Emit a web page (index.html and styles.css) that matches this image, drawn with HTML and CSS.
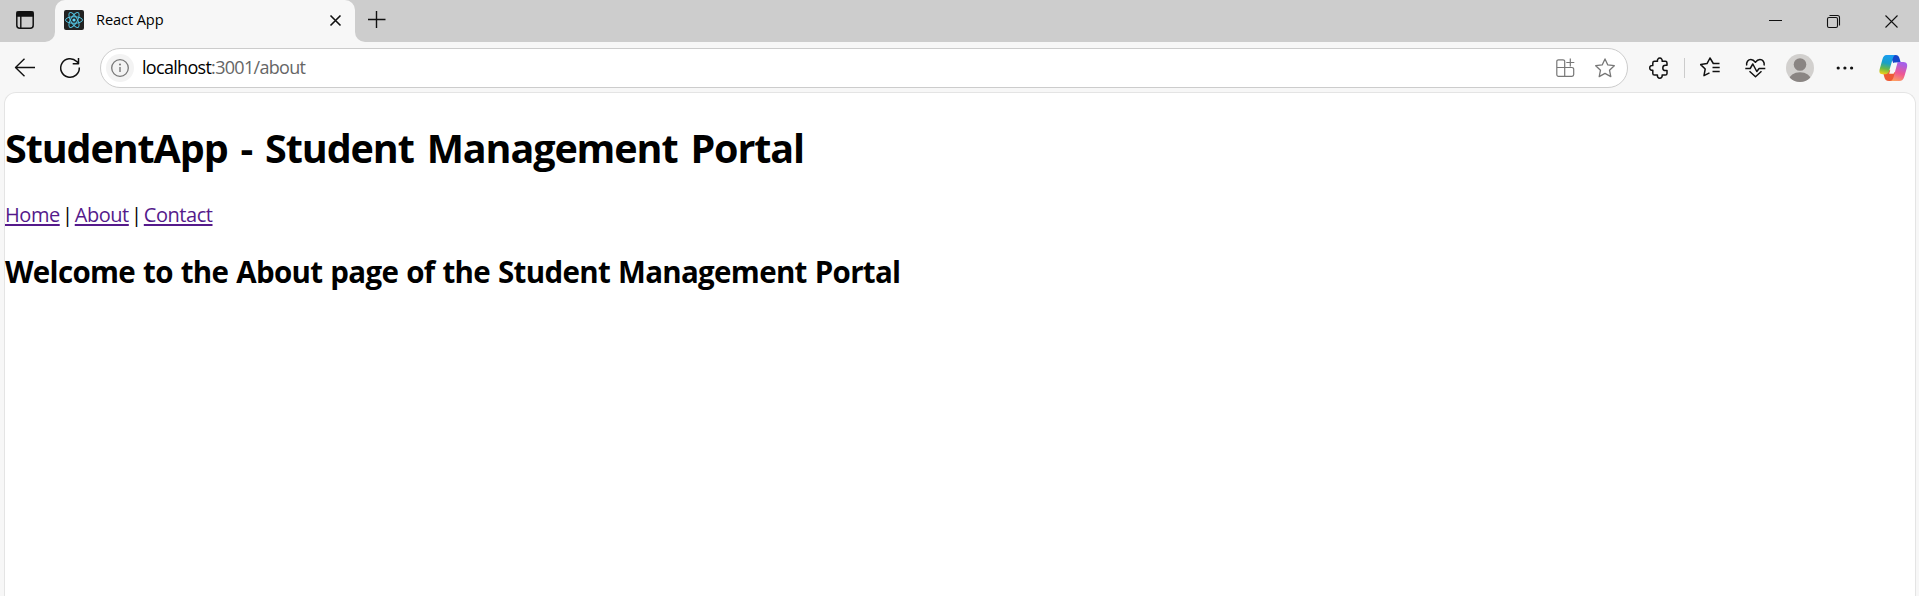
FILE: index.html
```html
<!DOCTYPE html>
<html lang="en">
<head>
<meta charset="utf-8">
<title>React App</title>
<link rel="stylesheet" href="styles.css">
</head>
<body>
<div class="browser">
  <header class="tabstrip">
    <div class="strip-start">
      <svg class="icon" width="55" height="43" viewBox="0 0 55 43"><rect x="16.8" y="11.8" width="16.4" height="16.4" rx="3" stroke-width="1.5"/><path d="M17 12h16v4H17z" fill="#111"/><path d="M20.8 16v12"/></svg>
    </div>
    <div class="tab-slot">
      <div class="tab">
        <svg class="favicon" width="20" height="20" viewBox="0 0 20 20"><rect width="20" height="20" rx="2" fill="#222"/><g fill="none" stroke="#53c1de" stroke-width="1"><ellipse cx="10" cy="10" rx="8.5" ry="3.3"/><ellipse cx="10" cy="10" rx="8.5" ry="3.3" transform="rotate(60 10 10)"/><ellipse cx="10" cy="10" rx="8.5" ry="3.3" transform="rotate(120 10 10)"/></g><circle cx="10" cy="10" r="1.6" fill="#61dafb"/></svg>
        <span class="tab-title">React App</span>
        <svg class="icon" width="20" height="20" viewBox="0 0 20 20"><path d="M5.5 5.5l10 10M15.5 5.5l-10 10" stroke-width="1.6"/></svg>
      </div>
    </div>
    <div class="strip-rest">
      <svg class="icon" width="44" height="43" viewBox="0 0 44 43"><path d="M13 19.500h17.500M21.500 11v17" stroke-width="1.4"/></svg>
      <div class="window-controls">
        <svg class="icon" width="58" height="43" viewBox="0 0 58 43"><path d="M22 20.500h13" stroke-width="1"/></svg>
        <svg class="icon" width="58" height="43" viewBox="0 0 58 43"><rect x="22.5" y="17.5" width="10" height="10" rx="1.5" stroke-width="1.1"/><path d="M24.500 15.500h8a2 2 0 0 1 2 2v8" stroke-width="1.1"/></svg>
        <svg class="icon" width="56" height="43" viewBox="0 0 56 43"><path d="M22.500 15.500l12 12M34.500 15.500l-12 12" stroke-width="1.1"/></svg>
      </div>
    </div>
  </header>

  <div class="toolbar">
    <svg class="icon" width="45" height="40" viewBox="0 0 45 40"><path d="M33 19.500H13.500M22.500 10.800L13.500 19.500l9 8.700" stroke-width="1.4"/></svg>
    <svg class="icon" width="45" height="40" viewBox="0 0 45 40"><path d="M32.300 19.500a9.300 9.300 0 1 1-2.600-6l2 2.100M31.500 10v5.700h-5.800" stroke-width="1.5"/></svg>
    <div class="address">
      <span class="site-info"><svg class="icon muted" width="20" height="20" viewBox="0 0 20 20"><circle cx="10" cy="10" r="8.3" stroke-width="1.3"/><path d="M10 9v5" stroke-width="1.4"/><circle cx="10" cy="6.5" r=".9" fill="#666" stroke="none"/></svg></span>
      <span class="url"><b>localhost</b>:3001/about</span>
      <svg class="icon muted" width="40" height="38" viewBox="0 0 40 38"><path d="M19.500 18.500H11.800v-6a1.700 1.700 0 0 1 1.700-1.700H18a1.700 1.700 0 0 1 1.700 1.700v14.800h-6.200a1.700 1.700 0 0 1-1.700-1.700v-7.100M19.700 18.500H27a1.700 1.700 0 0 1 1.700 1.700v5.400a1.700 1.700 0 0 1-1.700 1.700h-7.300M25.300 9.500v8M21.300 13.500h8" stroke-width="1.2"/></svg>
      <svg class="icon muted" width="42" height="38" viewBox="0 0 42 38"><path d="M20 9.900l2.800 6 6.500.8-4.800 4.500 1.300 6.400-5.800-3.200-5.800 3.200 1.300-6.400-4.800-4.500 6.500-.8z" stroke-width="1.3"/></svg>
    </div>
    <svg class="icon extensions" width="45" height="40" viewBox="0 0 45 40"><path d="M18.500 13.200h3a2.400 2.400 0 1 1 4.600 0h3.200q1.700 0 1.700 1.700v2.300h-1.500a2.700 2.700 0 1 0 0 5.400H31v2.800q0 1.700-1.700 1.700h-3.200a2.400 2.400 0 1 1-4.600 0h-3q-1.700 0-1.700-1.700v-3.200a2.400 2.400 0 1 1 0-4.600v-2.700q0-1.700 1.700-1.700z" stroke-width="1.5"/></svg>
    <span class="divider"></span>
    <svg class="icon" width="45" height="40" viewBox="0 0 45 40"><path d="M32.500 15.500h-6.200L23 10l-3 5.600-6.300 1 4.500 4.400-1.200 6.700 5.500-2.800M25.500 19.500h7.200M25.500 23.500h7.200" stroke-width="1.5"/></svg>
    <svg class="icon" width="45" height="40" viewBox="0 0 45 40"><path d="M14.700 17.500c-.7-3.500 1.400-6 4.200-6 2 0 3.300 1.200 4.500 2.800 1.200-1.600 2.500-2.800 4.500-2.800 2.800 0 4.900 2.500 4.200 6M13.300 20.500h4.900l2.600-4.500 4 7.500 2.300-3h6.200M17.500 23.300l6 5.400 6-5.400" stroke-width="1.5"/></svg>
    <svg width="45" height="40" viewBox="0 0 45 40"><defs><clipPath id="face"><circle cx="23" cy="20" r="14"/></clipPath></defs><circle cx="23" cy="20" r="14" fill="#d2d0ce"/><g clip-path="url(#face)" fill="#8a8583"><circle cx="23" cy="16.5" r="6.3"/><ellipse cx="23" cy="32" rx="11" ry="7.8"/></g></svg>
    <svg width="45" height="40" viewBox="0 0 45 40" fill="#111"><circle cx="16.2" cy="20" r="1.6"/><circle cx="22.9" cy="20" r="1.6"/><circle cx="29.6" cy="20" r="1.6"/></svg>
    <svg width="52" height="40" viewBox="0 0 52 40">
      <defs>
        <linearGradient id="cool" x1=".4" y1="0" x2=".2" y2="1"><stop offset="0" stop-color="#1a9df0"/><stop offset=".4" stop-color="#18a0c8"/><stop offset=".7" stop-color="#69b847"/><stop offset="1" stop-color="#f5cf18"/></linearGradient>
        <linearGradient id="warm" x1=".4" y1="0" x2=".1" y2="1"><stop offset="0" stop-color="#a661e8"/><stop offset=".5" stop-color="#ee5794"/><stop offset="1" stop-color="#ffa75c"/></linearGradient>
      </defs>
      <path d="M23 7h5.500c2.500 0 3.500 1.500 4.200 4l1 3.500h-3c-2 0-2.700 1-3.400 3z" fill="#1747cb"/>
      <path d="M26 33h-4c-3 0-4-1.500-4.700-4l-1.100-4c3 0 4-1 4.800-3.500L29 25z" fill="#ee5a35"/>
      <path d="M19.500 7H29c-2 0-2.800 2-3.500 4.500l-3.200 11c-.8 2.700-1.800 3.700-4 3.700h-2.600c-3.500 0-3.700-2.700-2.900-5.400l2.500-9.100C16.300 8.500 17.300 7 19.500 7z" fill="url(#cool)"/>
      <path d="M31.500 14h5c3.500 0 4.200 2.800 3.400 5.700l-2.500 8.600c-1 3.500-2.500 4.700-5 4.700H23c2 0 3-1.500 3.700-4.200l3-11.300c.6-2.500.9-3.500 1.800-3.500z" fill="url(#warm)"/>
      <path d="M30.500 14.500c-.7.500-1 1.500-1.400 3L26.700 25.800h-4.500l2.700-9c.6-1.700 1.800-2.300 4.300-2.300z" fill="#f7f7f7"/>
    </svg>
  </div>

  <main class="page">
    <h1>StudentApp - Student Management Portal</h1>
    <nav><a href="#">Home</a><i>|</i><a href="#">About</a><i>|</i><a href="#">Contact</a></nav>
    <h2>Welcome to the About page of the Student Management Portal</h2>
  </main>
</div>
</body>
</html>
```
FILE: styles.css
```css
* { box-sizing: border-box; }
body { margin: 0; font-family: "Segoe UI", "Open Sans", "Noto Sans", sans-serif; color: #000; }
svg { display: block; flex: none; }
.browser { display: flex; flex-direction: column; height: 596px; overflow: hidden; background: #f7f7f7; }
.icon { fill: none; stroke: #111; stroke-width: 1.4; stroke-linejoin: round; }
.muted { stroke: #777; }

.tabstrip { display: flex; height: 43px; flex: none; }
.strip-start { width: 55px; height: 42px; background: #cdcdcd; border-radius: 0 0 10px 0; }
.tab-slot { width: 300px; background: linear-gradient(#cdcdcd 20px, #f7f7f7 20px); }
.tab { display: flex; align-items: center; height: 43px; padding: 0 10px 3px 9px; background: #f7f7f7; border-radius: 10px 10px 0 0; }
.tab-title { flex: 1; padding: 0 0 2px 12px; font-size: 14.6px; letter-spacing: -0.1px; white-space: nowrap; }
.strip-rest { display: flex; justify-content: space-between; flex: 1; height: 42px; background: #cdcdcd; border-radius: 0 0 0 10px; }
.window-controls { display: flex; }

.toolbar { display: flex; height: 49px; flex: none; padding: 5px 0 4px 2px; }
.address { display: flex; align-items: center; flex: 1; height: 40px; margin: 0 8px; border: 1px solid #ccc; border-radius: 20px; background: #fff; }
.site-info { display: grid; place-items: center; width: 28px; height: 28px; margin-left: 5px; border-radius: 50%; background: #f3f3f3; }
.url { flex: 1; padding: 0 0 2px 8px; font-size: 18px; letter-spacing: -0.7px; color: #666; }
.url b { font-weight: 400; color: #000; }
.divider { width: 1px; height: 20px; margin: 10px 2px 0 3px; background: #ccc; }

.page { flex: 1; margin: 0 3px 0 4px; border: 1px solid #e4e4e4; border-bottom: 0; border-radius: 12px 12px 0 0; background: #fff; font-size: 20px; }
.page h1 { margin: 27px 0 0; font-size: 39.5px; line-height: 56px; letter-spacing: -1.1px; word-spacing: 3.8px; white-space: nowrap; }
.page nav { display: flex; margin-top: 25px; line-height: 28px; letter-spacing: -0.45px; }
.page nav i { width: 15px; text-align: center; font-style: normal; }
.page a { color: #551a8b; text-decoration-thickness: 2px; text-underline-offset: 2px; text-decoration-skip-ink: none; }
.page h2 { margin: 22px 0 0; font-size: 29.5px; line-height: 42px; letter-spacing: -0.68px; word-spacing: 1px; white-space: nowrap; }
```
